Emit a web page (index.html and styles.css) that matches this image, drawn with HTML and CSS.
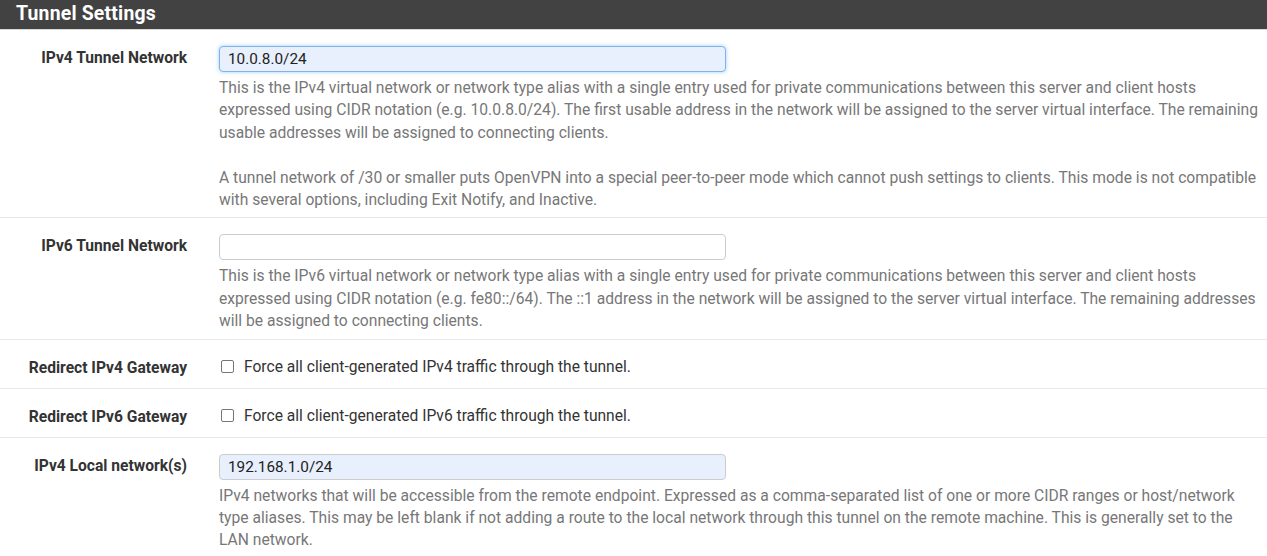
FILE: index.html
```html
<!DOCTYPE html>
<html>
<head>
<meta charset="utf-8">
<title>Tunnel Settings</title>
<link rel="stylesheet" href="styles.css">
</head>
<body>
<div class="panel">
  <div class="panel-heading">Tunnel Settings</div>
  <div class="panel-body">
    <div class="row">
      <div class="label">IPv4 Tunnel Network</div>
      <div class="field">
        <input class="input filled focused" type="text" value="10.0.8.0/24">
        <div class="help">This is the IPv4 virtual network or network type alias with a single entry used for private communications between this server and client hosts expressed using CIDR notation (e.g. 10.0.8.0/24). The first usable address in the network will be assigned to the server virtual interface. The remaining usable addresses will be assigned to connecting clients.<br><br>A tunnel network of /30 or smaller puts OpenVPN into a special peer-to-peer mode which cannot push settings to clients. This mode is not compatible with several options, including Exit Notify, and Inactive.</div>
      </div>
    </div>
    <div class="row">
      <div class="label">IPv6 Tunnel Network</div>
      <div class="field">
        <input class="input" type="text" value="">
        <div class="help">This is the IPv6 virtual network or network type alias with a single entry used for private communications between this server and client hosts expressed using CIDR notation (e.g. fe80::/64). The ::1 address in the network will be assigned to the server virtual interface. The remaining addresses will be assigned to connecting clients.</div>
      </div>
    </div>
    <div class="row row-check">
      <div class="label">Redirect IPv4 Gateway</div>
      <div class="field">
        <label class="check"><span class="box"></span>Force all client-generated IPv4 traffic through the tunnel.</label>
      </div>
    </div>
    <div class="row row-check">
      <div class="label">Redirect IPv6 Gateway</div>
      <div class="field">
        <label class="check"><span class="box"></span>Force all client-generated IPv6 traffic through the tunnel.</label>
      </div>
    </div>
    <div class="row">
      <div class="label">IPv4 Local network(s)</div>
      <div class="field">
        <input class="input filled" type="text" value="192.168.1.0/24">
        <div class="help">IPv4 networks that will be accessible from the remote endpoint. Expressed as a comma-separated list of one or more CIDR ranges or host/network type aliases. This may be left blank if not adding a route to the local network through this tunnel on the remote machine. This is generally set to the LAN network.</div>
      </div>
    </div>
  </div>
</div>
</body>
</html>
```

FILE: styles.css
```css
* { box-sizing: border-box; }
html, body { margin: 0; padding: 0; background: #fff; }
body {
  font-family: Roboto, "Liberation Sans", Arial, sans-serif;
  font-size: 15.6px;
  color: #333;
}
.panel-heading {
  height: 30px;
  background: #424242;
  border-bottom: 1px solid #d8d8d8;
  color: #fff;
  font-weight: 700;
  font-size: 19.4px;
  line-height: 28px;
  padding-left: 16px;
  letter-spacing: 0.2px;
}
.row {
  display: grid;
  grid-template-columns: 187px 1fr;
  column-gap: 32px;
  padding: 16px 5px 6px 0;
  border-bottom: 1px solid #e8e8e8;
}
.row-check { padding-bottom: 9px; }
.label {
  text-align: right;
  font-weight: 700;
  font-size: 15.6px;
  line-height: 22px;
  padding-top: 1px;
  color: #333;
}
.input {
  display: block;
  width: 507px;
  height: 26px;
  border: 1px solid #ccc;
  border-radius: 4px;
  padding: 0 8px;
  font-family: inherit;
  font-size: 15.3px;
  color: #222;
  background: #fff;
  outline: none;
}
.input.filled { background: #e8f0fe; }
.input.focused {
  border-color: #80b3ec;
  box-shadow: 0 0 4px rgba(102, 175, 233, 0.6);
}
.help {
  margin-top: 5px;
  color: #777;
  font-size: 15.65px;
  line-height: 22.4px;
}
.check {
  display: flex;
  align-items: center;
  line-height: 22px;
  font-size: 15.6px;
  color: #333;
  padding-left: 2px;
}
.box {
  width: 13px;
  height: 13px;
  border: 1px solid #767676;
  border-radius: 2px;
  margin-right: 10px;
  background: #fff;
}
```
